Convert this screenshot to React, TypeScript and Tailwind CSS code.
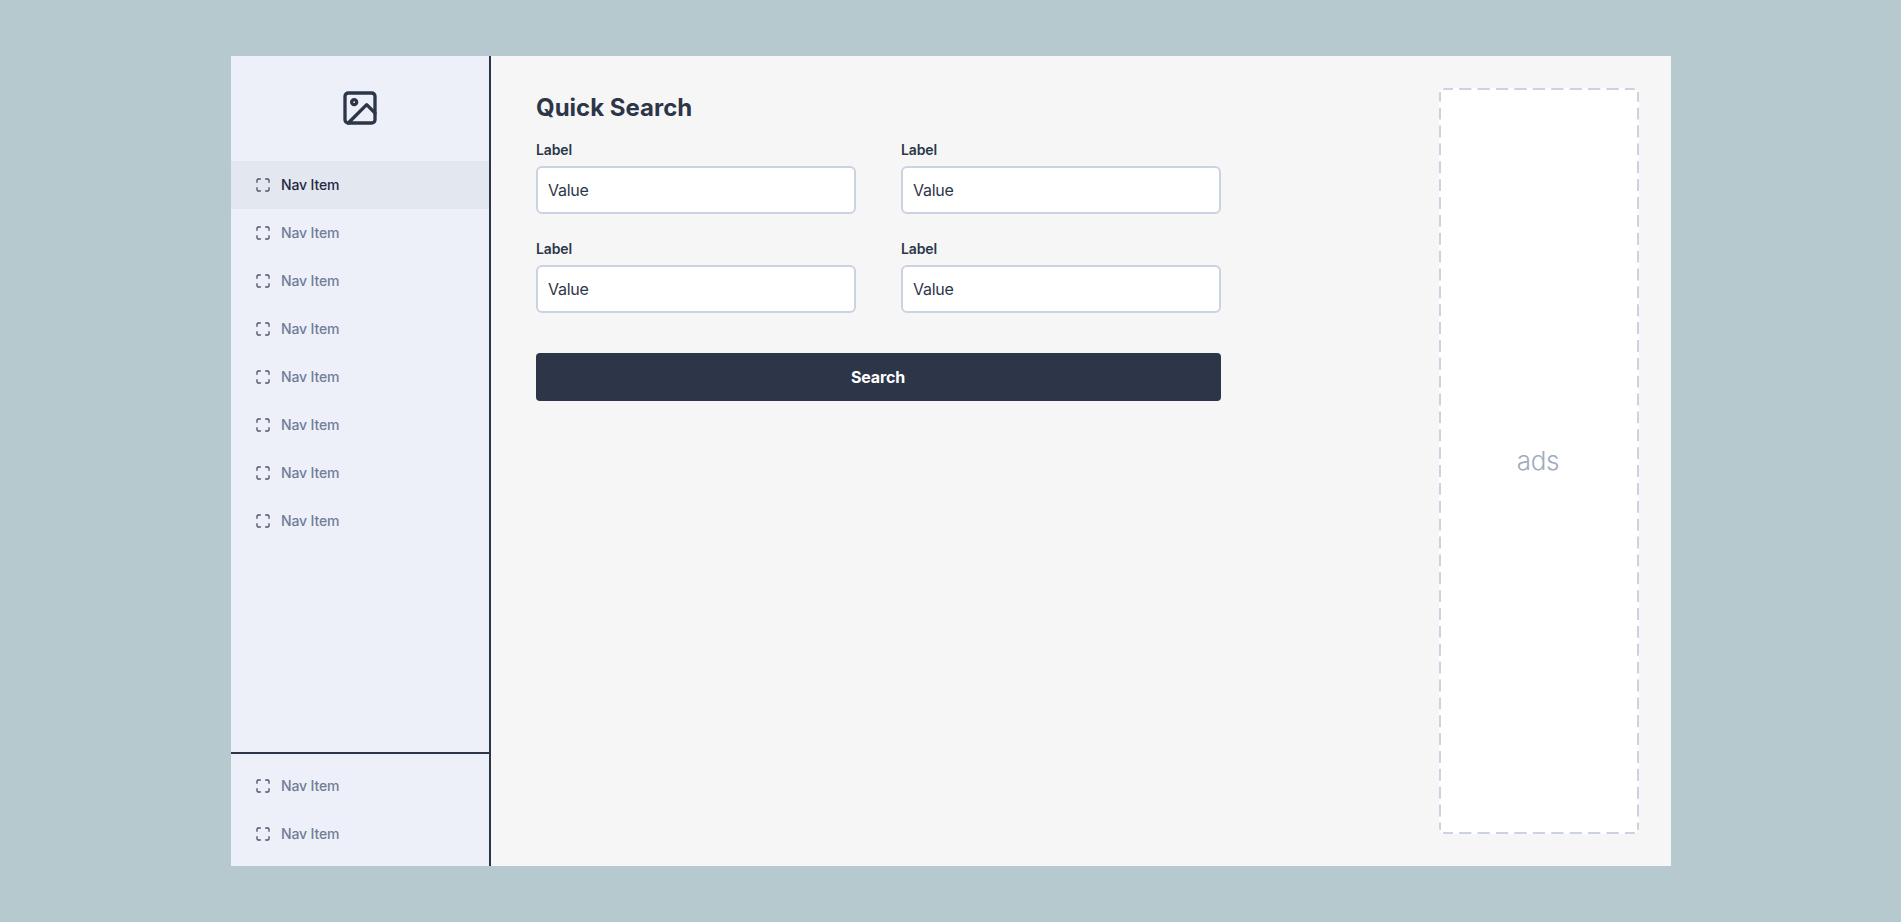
import type { ReactNode } from 'react';

interface IconProps {
  className: string;
  children: ReactNode;
}

function Icon({ className, children }: IconProps) {
  return (
    <svg
      className={className}
      viewBox="0 0 24 24"
      fill="none"
      stroke="currentColor"
      strokeWidth={2}
      strokeLinecap="round"
      strokeLinejoin="round"
    >
      {children}
    </svg>
  );
}

function NavItem({ active = false }: { active?: boolean }) {
  return (
    <a
      className={`flex h-12 items-center gap-[10.5px] px-6 text-sm font-medium tracking-[-0.01em] ${
        active ? 'bg-[#e2e7f0] text-[#1f2a40]' : 'text-[#717d96]'
      }`}
    >
      <Icon className="size-4 text-[#4a5468]">
        <path d="M8 3H5a2 2 0 0 0-2 2v3m18 0V5a2 2 0 0 0-2-2h-3m0 18h3a2 2 0 0 0 2-2v-3M3 16v3a2 2 0 0 0 2 2h3" />
      </Icon>
      Nav Item
    </a>
  );
}

function Sidebar() {
  return (
    <aside className="flex w-[260px] shrink-0 flex-col border-r-2 border-[#2d3648] bg-[#edf0f8]">
      <div className="flex h-[105px] justify-center pt-8">
        <Icon className="size-10 text-[#2d3648]">
          <rect x="3" y="3" width="18" height="18" rx="2" />
          <circle cx="8.5" cy="8.5" r="1.5" />
          <path d="M21 15l-5-5L5 21" />
        </Icon>
      </div>
      <nav className="grow">
        {Array.from({ length: 8 }, (_, i) => (
          <NavItem key={i} active={i === 0} />
        ))}
      </nav>
      <nav className="border-t-2 border-[#2d3648] py-2">
        <NavItem />
        <NavItem />
      </nav>
    </aside>
  );
}

function Field() {
  return (
    <label className="block text-sm font-semibold leading-5 tracking-[-0.01em] text-[#2d3648]">
      <span className="block pl-[0.5px]">Label</span>
      <span className="mt-1.5 flex h-12 items-center rounded-md border-2 border-[#cbd2e1] bg-white px-[10.5px] text-base font-normal tracking-[-0.015em]">
        Value
      </span>
    </label>
  );
}

function AdSlot() {
  return (
    <div className="relative flex h-[746px] w-[200px] items-center justify-center overflow-hidden rounded-md bg-white pr-px text-[26px] font-[350] tracking-[-0.01em] text-[#a0abc0]">
      ads
      <svg className="absolute inset-0 size-full" fill="none" stroke="#cbd2e1" strokeWidth={2}>
        <path d="M4 1H196M4 745H196" strokeDasharray="12.3 6.12" strokeDashoffset={2.3} />
        <path d="M1 4V742M199 4V742" strokeDasharray="11.9 5.97" strokeDashoffset={2.2} />
      </svg>
    </div>
  );
}

export default function App() {
  return (
    <div className="flex h-screen items-center justify-center bg-[#b5c9ce] pb-px font-[Inter,sans-serif]">
      <div className="flex h-[810px] w-[1440px] bg-[#f6f6f6]">
        <Sidebar />
        <main className="flex grow justify-between py-8 pl-[45px] pr-8">
          <section className="w-[685px]">
            <h1 className="pl-[0.5px] pt-1 text-2xl font-bold leading-8 text-[#2d3648]">
              Quick Search
            </h1>
            <div className="mt-4 grid grid-cols-2 gap-x-[45px] gap-y-[25px]">
              <Field />
              <Field />
              <Field />
              <Field />
            </div>
            <button className="mt-10 h-12 w-full rounded bg-[#2d3648] text-base font-bold tracking-[-0.01em] text-white">
              Search
            </button>
          </section>
          <AdSlot />
        </main>
      </div>
    </div>
  );
}
